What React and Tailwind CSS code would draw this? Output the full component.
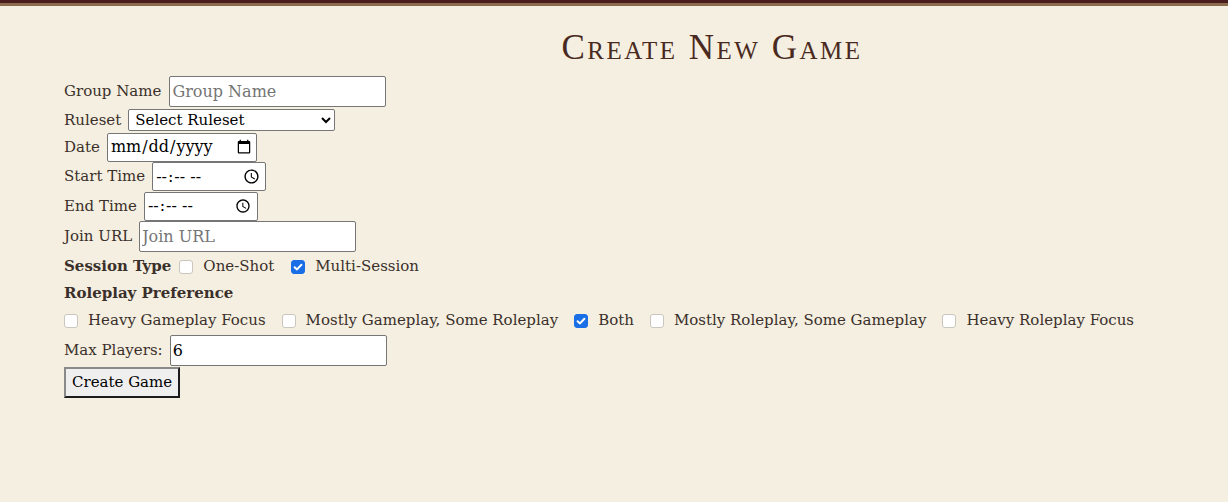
import { useState } from "react"

function Check({ defaultChecked = false, className = "" }) {
  const [on, setOn] = useState(defaultChecked)
  return (
    <span className={`relative inline-flex shrink-0 w-[14px] h-[14px] ${className}`}>
      <input
        type="checkbox"
        checked={on}
        onChange={() => setOn(!on)}
        className={`appearance-none shrink-0 w-[14px] h-[14px] rounded-[3px] border m-0 ${
          on ? "bg-[#1a6fe6] border-[#1a6fe6]" : "bg-white border-[#c9c6bf]"
        }`}
      />
      {on && (
        <svg viewBox="0 0 14 14" className="absolute inset-0 w-[14px] h-[14px] pointer-events-none">
          <path d="M3.6 7.2 L6 9.4 L10.4 4.8" fill="none" stroke="white" strokeWidth="2" strokeLinecap="round" strokeLinejoin="round" />
        </svg>
      )}
    </span>
  )
}

export default function App() {
  const body = { fontFamily: '"DejaVu Serif", "Liberation Serif", serif' }
  const inputCls =
    "bg-white border border-[#767676] rounded-[2px] px-[2px] text-[16px] text-black placeholder:text-[#757575] outline-none"

  return (
    <div className="min-h-[502px] bg-[#f4efe0] text-[#3b2f2b]" style={body}>
      <div className="h-[3px] bg-[#4a1c1e]" />
      <div className="h-[3px] bg-[#8b6b4c]" />

      <div className="pl-[196px] pt-[22px] text-center">
        <h1
          className="text-[35px] leading-[40px] text-[#4a2a20] tracking-[2.5px]"
          style={{ fontFamily: '"Liberation Serif", serif', fontVariant: "small-caps" }}
        >
          Create New Game
        </h1>
      </div>

      <form className="pt-[7px] pl-[64px] flex flex-col text-[15px]" onSubmit={(e) => e.preventDefault()}>
        <div className="h-[33px] flex items-center gap-[8px]">
          <label>Group Name</label>
          <input className={`${inputCls} w-[217px] h-[31px]`} placeholder="Group Name" />
        </div>

        <div className="h-[24px] flex items-center gap-[7px]">
          <label>Ruleset</label>
          <select className="bg-white border border-[#767676] rounded-[2px] w-[207px] h-[22px] text-[15px] text-black pl-[2px]">
            <option>Select Ruleset</option>
            <option>D&amp;D 5e</option>
          </select>
        </div>

        <div className="h-[30px] flex items-center gap-[7px]">
          <label>Date</label>
          <input type="date" className={`${inputCls} w-[150px] h-[29px]`} />
        </div>

        <div className="h-[29px] flex items-center gap-[7px]">
          <label>Start Time</label>
          <input type="time" className={`${inputCls} w-[114px] h-[29px]`} />
        </div>

        <div className="h-[30px] flex items-center gap-[7px]">
          <label>End Time</label>
          <input type="time" className={`${inputCls} w-[114px] h-[29px]`} />
        </div>

        <div className="h-[31px] flex items-center gap-[7px]">
          <label>Join URL</label>
          <input className={`${inputCls} w-[217px] h-[31px]`} placeholder="Join URL" />
        </div>

        <div className="h-[28px] pt-[1px] flex items-center">
          <span className="font-bold mr-[8px]">Session Type</span>
          <Check className="mr-[10px]" />
          <span className="mr-[17px]">One-Shot</span>
          <Check defaultChecked className="mr-[10px]" />
          <span>Multi-Session</span>
        </div>

        <div className="h-[27px] flex items-center font-bold">Roleplay Preference</div>

        <div className="h-[27px] flex items-center">
          {[
            ["Heavy Gameplay Focus", false],
            ["Mostly Gameplay, Some Roleplay", false],
            ["Both", true],
            ["Mostly Roleplay, Some Gameplay", false],
            ["Heavy Roleplay Focus", false],
          ].map(([label, checked]) => (
            <span key={label} className="flex items-center mr-[16px]">
              <Check defaultChecked={checked} className="mr-[10px]" />
              <span>{label}</span>
            </span>
          ))}
        </div>

        <div className="h-[33px] flex items-center gap-[7px]">
          <label>Max Players:</label>
          <input type="number" defaultValue={6} className={`${inputCls} w-[217px] h-[31px]`} />
        </div>

        <div className="h-[31px] flex items-center">
          <button
            type="submit"
            className="h-[31px] px-[6px] bg-[#efefef] text-black text-[15px] border-2 border-t-[#8a8a8a] border-l-[#8a8a8a] border-r-[#1c1c1c] border-b-[#1c1c1c]"
          >
            Create Game
          </button>
        </div>
      </form>
    </div>
  )
}
